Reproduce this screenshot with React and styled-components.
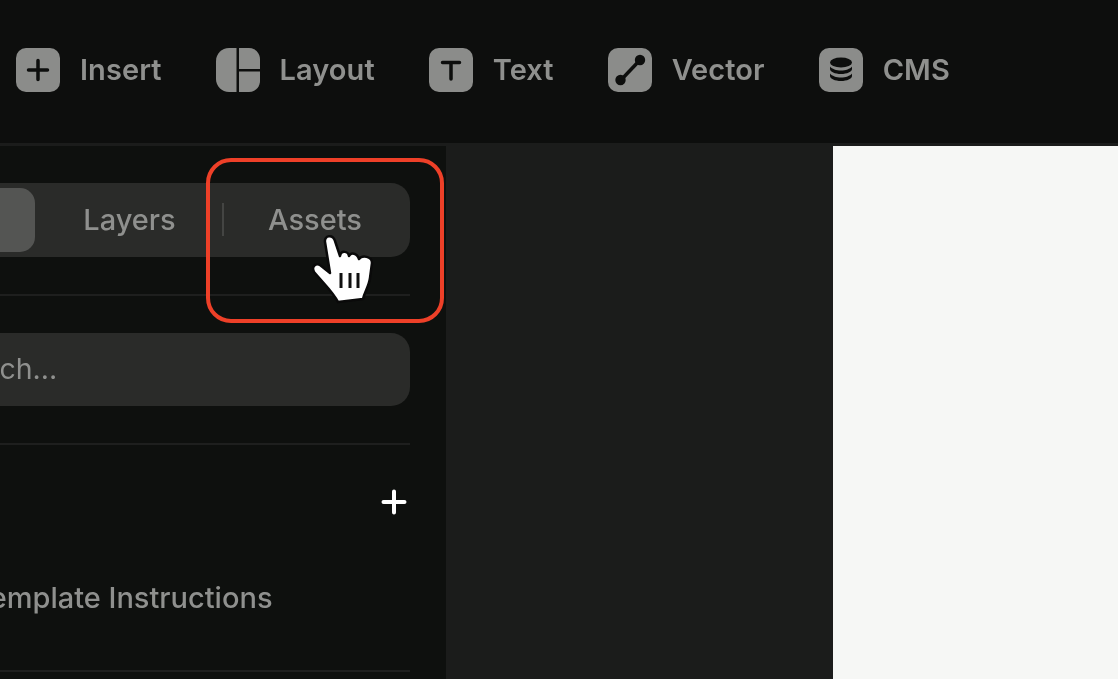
import React from "react";
import styled, { createGlobalStyle } from "styled-components";

const Global = createGlobalStyle`
  html, body { margin: 0; padding: 0; background: #0d0e0d; }
  body { font-family: Inter, "Liberation Sans", sans-serif; }
`;
const Page = styled.div`
  position: relative; width: 1118px; height: 679px; overflow: hidden;
  display: flex; flex-direction: column; background: #0d0e0d;
  filter: blur(0.35px);
`;
const TopBar = styled.header`
  flex: 0 0 146px; display: flex; align-items: center; gap: 54px;
  padding: 0 0 4px 16px; box-sizing: border-box; background: #0d0e0d;
  border-bottom: 3px solid #1b1c1b;
`;
const Tool = styled.div`
  display: flex; align-items: center; gap: 20px;
  color: #8f908e; font-size: 29px; font-weight: 600; letter-spacing: 0.07px;
`;
const IconTile = styled.svg`
  width: 44px; height: 44px; display: block; flex: none;
`;
const Body = styled.main`
  flex: 1; display: flex; min-height: 0;
`;
const Sidebar = styled.aside`
  flex: 0 0 449px; box-sizing: border-box; overflow: hidden;
  background: #0e100e; border-right: 3px solid #1b1c1b;
`;
const SideInner = styled.div`
  width: 572px; margin-left: -162px; padding-top: 37px;
  display: flex; flex-direction: column;
`;
const Tabs = styled.div`
  height: 74px; box-sizing: border-box; padding: 5px 0 5px 5px;
  border-radius: 19px; background: #2a2b29;
  display: grid; grid-template-columns: 192px 187px 184px; align-items: center;
`;
const Tab = styled.div`
  height: 64px; display: flex; align-items: center; justify-content: center;
  font-size: 29px; font-weight: 500; color: #8f908e; position: relative;
  border-radius: 15px; padding: 0 0 2px 2px; box-sizing: border-box;
  background: ${p => (p.$active ? "#545553" : "transparent")};
`;
const TabSep = styled.span`
  position: absolute; left: 0; top: 15px; width: 2px; height: 33px; background: #444543;
`;
const Rule = styled.hr`
  margin: 0; border: 0; height: 2px; background: #1e1f1e;
  margin-top: ${p => p.$top}px;
`;
const Search = styled.div`
  margin-top: 37px; height: 73px; box-sizing: border-box; padding: 0 0 2px 100px;
  border-radius: 19px; background: #2a2b29; display: flex; align-items: center;
  font-size: 28.5px; color: #8f908e;
`;
const SectionHead = styled.div`
  height: 117px; box-sizing: border-box; display: flex; align-items: center;
  justify-content: flex-end; padding: 0 3px 4px 0;
`;
const Row = styled.div`
  height: 108px; display: flex; align-items: flex-start;
  padding: 18px 0 0 135px; box-sizing: border-box;
  font-size: 29px; font-weight: 500; color: #8f908e; white-space: nowrap;
`;
const Canvas = styled.section`
  flex: 1; background: #1b1c1b; display: flex; justify-content: flex-end;
`;
const Artboard = styled.div`
  width: 285px; background: #f6f7f5;
`;
const Highlight = styled.div`
  position: absolute; left: 206px; top: 158px; width: 238px; height: 165px;
  box-sizing: border-box; border: 4px solid #ee4028; border-radius: 25px;
  pointer-events: none;
`;
const Cursor = styled.svg`
  position: absolute; left: 305px; top: 232px; width: 70px; height: 75px;
`;

const dark = "#0d0e0d";
const grey = "#8b8c8a";

const Tile = ({ children }) => (
  <IconTile viewBox="0 0 44 44" fill="none">
    <rect width="44" height="44" rx="10" fill={grey} />
    {children}
  </IconTile>
);

const tools = [
  ["Insert", (
    <Tile key="i"><path d="M22 12.500v19M12.500 22h19" stroke={dark} strokeWidth="3.500" strokeLinecap="round" /></Tile>
  )],
  ["Layout", (
    <IconTile key="l" viewBox="0 0 44 44" fill={grey}>
      <path d="M13 0h7.500v44H13C5.800 44 0 38.200 0 31V13C0 5.800 5.800 0 13 0Z" />
      <path d="M23 0h10c6 0 11 5 11 11v10H23Z" />
      <path d="M23 23.500h21V33c0 6-5 11-11 11H23Z" />
    </IconTile>
  )],
  ["Text", (
    <Tile key="t"><path d="M13.500 14.500h17M22 14.500V31" stroke={dark} strokeWidth="3.500" strokeLinecap="round" /></Tile>
  )],
  ["Vector", (
    <Tile key="v">
      <path d="M13 32 32 12" stroke={dark} strokeWidth="3.500" />
      <circle cx="12.500" cy="32" r="5.200" fill={dark} />
      <circle cx="32" cy="12" r="5.200" fill={dark} />
    </Tile>
  )],
  ["CMS", (
    <Tile key="c">
      <ellipse cx="22" cy="14.500" rx="11" ry="5" fill={dark} />
      <path d="M11 18.500v2.500c0 2.800 5 5 11 5s11-2.200 11-5v-2.500c-2 2.500-6.300 4-11 4s-9-1.500-11-4Z" fill={dark} />
      <path d="M11 25.500v2.500c0 2.800 5 5 11 5s11-2.200 11-5v-2.500c-2 2.500-6.300 4-11 4s-9-1.500-11-4Z" fill={dark} />
    </Tile>
  )],
];

export default function App() {
  return (
    <Page>
      <Global />
      <TopBar>
        {tools.map(([label, icon]) => (
          <Tool key={label}>{icon}<span>{label}</span></Tool>
        ))}
      </TopBar>
      <Body>
        <Sidebar>
          <SideInner>
            <Tabs>
              <Tab $active>Pages</Tab>
              <Tab>Layers</Tab>
              <Tab><TabSep />Assets</Tab>
            </Tabs>
            <Rule $top={37} />
            <Search>Search...</Search>
            <Rule $top={37} />
            <SectionHead>
              <svg width="26" height="26" viewBox="0 0 26 26" fill="none">
                <path d="M13 2.500v21M2.500 13h21" stroke="#fff" strokeWidth="4" strokeLinecap="round" />
              </svg>
            </SectionHead>
            <Row>Template Instructions</Row>
            <Rule $top={0} />
          </SideInner>
        </Sidebar>
        <Canvas><Artboard /></Canvas>
      </Body>
      <Highlight />
      <Cursor viewBox="305 232 70 75" fill="none">
        <path d="M325 242C324 235 333 234 335 241L340 256C341 250 348 251 349 256C351 252 357 253 359 259C362 255 372 256 372 263L370 278C369 286 365 291 363 299L338 302C333 292 325 285 314 272C311 266 316 263 320 265L330 273Z" fill="#fff" stroke="#0a0a0a" strokeWidth="2.500" strokeLinejoin="round" />
        <path d="M341 273v15M350 273v15M358 273v15" stroke="#111" strokeWidth="3" />
      </Cursor>
    </Page>
  );
}
